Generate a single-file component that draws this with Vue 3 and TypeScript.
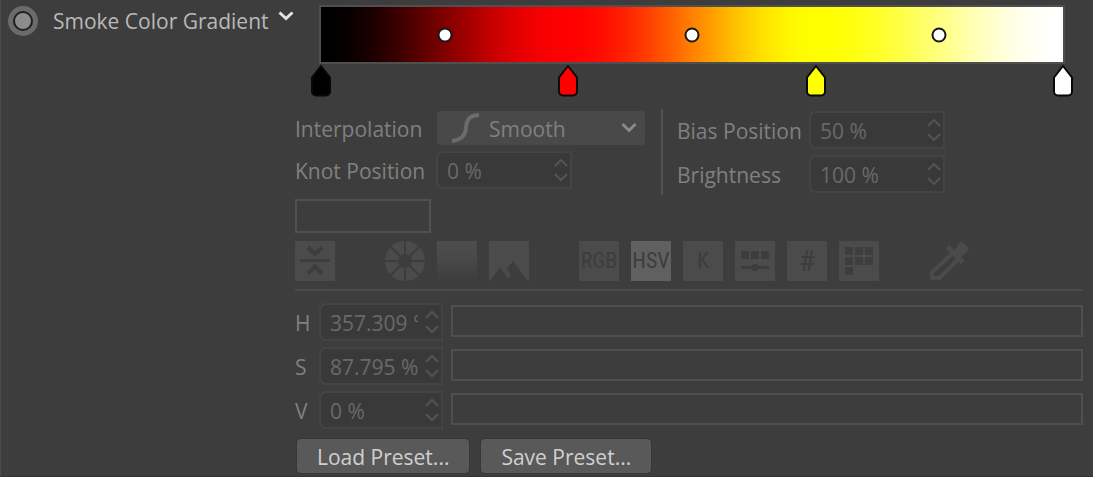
<script setup lang="ts">
import { computed, ref } from 'vue'

interface Knot {
  position: number
  color: [number, number, number]
}

interface Channel {
  id: string
  label: string
  value: string
}

const knots: Knot[] = [
  { position: 0, color: [0, 0, 0] },
  { position: 1 / 3, color: [255, 0, 0] },
  { position: 2 / 3, color: [255, 255, 0] },
  { position: 1, color: [255, 255, 255] },
]

const channels = ref<Channel[]>([
  { id: 'hue', label: 'H', value: '357.309 °' },
  { id: 'saturation', label: 'S', value: '87.795 %' },
  { id: 'value', label: 'V', value: '0 %' },
])

const interpolation = ref('Smooth')
const knotPosition = ref('0 %')
const biasPosition = ref('50 %')
const brightness = ref('100 %')

const rgb = (c: number[]): string => `rgb(${c.map((v) => Math.round(v)).join(', ')})`
const percent = (n: number): string => `${(n * 100).toFixed(2)}%`

const biases = computed<number[]>(() =>
  knots.slice(1).map((k, i) => (k.position + knots[i].position) / 2),
)

// Smoothstep interpolation between neighbouring knots, sampled into CSS stops.
const gradient = computed<string>(() => {
  const steps = 16
  const stops: string[] = []
  for (let i = 0; i < knots.length - 1; i++) {
    const a = knots[i]
    const b = knots[i + 1]
    for (let s = 0; s <= steps; s++) {
      const t = s / steps
      const e = t * t * (3 - 2 * t)
      const color = a.color.map((v, n) => v + (b.color[n] - v) * e)
      stops.push(`${rgb(color)} ${percent(a.position + (b.position - a.position) * t)}`)
    }
  }
  return `linear-gradient(to right, ${stops.join(', ')})`
})
</script>

<template>
  <main class="panel">
    <header class="title">
      <input id="track" class="keyframe" type="radio" name="track" />
      <label for="track">Smoke Color Gradient</label>
      <button class="fold" type="button" aria-label="Toggle gradient options">
        <svg width="18" height="12" viewBox="0 0 18 12"><path d="M2.5 2.5 9 8.5l6.500-6" /></svg>
      </button>
    </header>

    <section class="editor">
      <div class="ramp">
        <div class="strip" :style="{ background: gradient }">
          <button
            v-for="b in biases"
            :key="b"
            class="bias"
            type="button"
            aria-label="Bias"
            :style="{ left: percent(b) }"
          ></button>
          <button
            v-for="k in knots"
            :key="k.position"
            class="knot"
            type="button"
            aria-label="Knot"
            :style="{ left: percent(k.position), color: rgb(k.color) }"
          >
            <svg width="22" height="36" viewBox="0 0 22 36">
              <path d="M11 4 20 15.500v14a4 4 0 0 1-4 4H6a4 4 0 0 1-4-4v-14z" />
            </svg>
          </button>
        </div>
      </div>

      <div class="settings">
        <div class="fields left">
          <label for="interpolation">Interpolation</label>
          <div class="dropdown">
            <svg class="curve" width="30" height="32" viewBox="0 0 30 32">
              <path d="M1 29C10 28 14.500 24 15 16S18 3.500 28 3" />
            </svg>
            <select id="interpolation" v-model="interpolation" disabled>
              <option>Smooth</option>
            </select>
            <svg class="arrow" width="18" height="12" viewBox="0 0 18 12"><path d="M2.500 2 9 8.500 15.500 2" /></svg>
          </div>
          <label for="knot-position">Knot Position</label>
          <div class="spin">
            <input id="knot-position" v-model="knotPosition" type="text" disabled />
            <svg width="16" height="24" viewBox="0 0 16 24"><path d="m2 8 6-6 6 6M2 16l6 6 6-6" /></svg>
          </div>
        </div>
        <div class="fields right">
          <label for="bias-position">Bias Position</label>
          <div class="spin">
            <input id="bias-position" v-model="biasPosition" type="text" disabled />
            <svg width="16" height="24" viewBox="0 0 16 24"><path d="m2 8 6-6 6 6M2 16l6 6 6-6" /></svg>
          </div>
          <label for="brightness">Brightness</label>
          <div class="spin">
            <input id="brightness" v-model="brightness" type="text" disabled />
            <svg width="16" height="24" viewBox="0 0 16 24"><path d="m2 8 6-6 6 6M2 16l6 6 6-6" /></svg>
          </div>
        </div>
      </div>

      <button class="swatch" type="button" aria-label="Knot color" disabled></button>

      <div class="toolbar">
        <div class="group">
          <button class="tool tile" type="button" aria-label="Compact view" disabled>
            <svg viewBox="0 0 40 40">
              <path d="M5 19.500h30" />
              <path class="chevrons" d="m13 6.500 7 6.500 7-6.500M13 32.500l7-7 7 7" />
            </svg>
          </button>
        </div>
        <div class="group">
          <button class="tool" type="button" aria-label="Color wheel" disabled>
            <svg viewBox="0 0 40 40">
              <circle class="wheel" cx="20" cy="20" r="13.500" />
              <path class="spokes" d="M20 0v13M20 27v13M0 20h13M27 20h13M5.500 5.500l10 10M24.500 24.500l10 10M34.500 5.500l-10 10M15.500 24.500l-10 10" />
            </svg>
          </button>
          <button class="tool spectrum" type="button" aria-label="Spectrum" disabled></button>
          <button class="tool tile" type="button" aria-label="Color from image" disabled>
            <svg viewBox="0 0 40 40">
              <path class="hole" d="M1 40 11 26.500l8 11 2-2-4-6L24 20l15 20z" />
              <path class="slit" d="m16.500 29 4.500 6.500" />
            </svg>
          </button>
        </div>
        <div class="group">
          <button class="tool tile mode" type="button" disabled>RGB</button>
          <button class="tool tile mode active" type="button" disabled>HSV</button>
          <button class="tool tile mode" type="button" disabled>K</button>
          <button class="tool tile" type="button" aria-label="Color mixer" disabled>
            <svg viewBox="0 0 40 40">
              <path class="hole" d="M6 10h8v8H6zM16 10h8v8h-8zM26 10h8v8h-8zM6 25h28v3H6z" />
              <circle class="hole" cx="20" cy="26.500" r="3.500" />
            </svg>
          </button>
          <button class="tool tile mode symbol" type="button" disabled>#</button>
          <button class="tool tile" type="button" aria-label="Swatches" disabled>
            <svg viewBox="0 0 40 40">
              <path class="hole" d="M6 6h8v8H6zM16 6h8v8h-8zM26 6h8v8h-8zM6 16h8v8H6zM16 16h8v8h-8zM26 16h8v8h-8zM6 26h8v8H6z" />
            </svg>
          </button>
        </div>
        <div class="group">
          <button class="tool" type="button" aria-label="Pick color" disabled>
            <svg viewBox="0 0 40 40">
              <path class="glass" d="M22.500 13 3 31.500V37h7.500L29 18.500" />
              <path class="bulb" d="m23 12 8-10.500q1.500-1.500 3 0l5 5q1.500 1.500 0 3L30 18z" />
              <path class="collar" d="m18.500 5.500 15.500 16" />
            </svg>
          </button>
        </div>
      </div>

      <div class="channels">
        <div v-for="c in channels" :key="c.id" class="channel">
          <label :for="c.id">{{ c.label }}</label>
          <div class="spin">
            <input :id="c.id" v-model="c.value" type="text" disabled />
            <svg width="16" height="24" viewBox="0 0 16 24"><path d="m2 8 6-6 6 6M2 16l6 6 6-6" /></svg>
          </div>
          <input class="slider" type="range" :aria-label="c.label" disabled />
        </div>
      </div>

      <div class="presets">
        <button type="button">Load Preset...</button>
        <button type="button">Save Preset...</button>
      </div>
    </section>
  </main>
</template>

<style>
body {
  margin: 0;
  background: #3d3d3d;
}
</style>

<style scoped>
.panel,
.panel * {
  box-sizing: border-box;
}

.panel {
  display: grid;
  grid-template-columns: 294px 1fr;
  min-height: 100vh;
  border-left: 1px solid #4b4b4b;
  border-bottom: 1px solid #343434;
  background: #3d3d3d;
  color: #808080;
  font: 21px/30px "Open Sans", "Noto Sans", sans-serif;
}

button,
input,
select {
  margin: 0;
  padding: 0;
  border: 0;
  background: none;
  color: inherit;
  font: inherit;
}

svg {
  display: block;
  fill: none;
  stroke: currentColor;
  stroke-width: 3;
}

.title {
  display: flex;
  align-items: center;
  height: 42px;
  padding-left: 12px;
  color: #b9b9b9;
}

.keyframe {
  flex: none;
  width: 20px;
  height: 20px;
  appearance: none;
  border: 2px solid #202020;
  border-radius: 50%;
  background: #8c8c8c;
  box-shadow: 0 0 0 5px #6b6b6b;
}

.title label {
  margin-left: 20px;
  white-space: nowrap;
}

.fold {
  margin: 0 0 10px auto;
  color: #e4e4e4;
}

.editor {
  min-width: 0;
  padding: 5px 10px 3px 0;
}

.ramp {
  height: 104px;
  padding: 0 18px 0 24px;
}

.strip {
  position: relative;
  height: 59px;
  border: 2px solid #4f4f4f;
  background-clip: padding-box !important;
}

.bias {
  position: absolute;
  top: 50%;
  width: 15px;
  height: 15px;
  border: 2px solid #181818;
  border-radius: 50%;
  background: #fff;
  transform: translate(-50%, -50%);
}

.knot {
  position: absolute;
  top: 100%;
  transform: translateX(-50%);
}

.knot path {
  fill: currentColor;
  stroke: #080808;
  stroke-width: 2;
}

.settings {
  display: flex;
}

.fields {
  display: grid;
  align-items: center;
}

.fields label,
.channel label,
.spin input {
  padding-top: 2px;
}

.left {
  grid-template-columns: 141px 209px;
  grid-template-rows: 38px 38px;
  row-gap: 4px;
  padding-right: 16px;
}

.right {
  grid-template-columns: 132px 136px;
  grid-template-rows: 38px 38px;
  row-gap: 6px;
  padding: 2px 0 2px 14px;
  border-left: 2px solid #505050;
}

.dropdown {
  position: relative;
  height: 34px;
  margin-left: 1px;
}

select {
  width: 100%;
  height: 100%;
  padding: 2px 0 0 52px;
  appearance: none;
  border-radius: 4px;
  background: #494949;
  opacity: 1;
}

.curve {
  position: absolute;
  top: 1px;
  left: 14px;
  color: #6c6c6c;
  stroke-width: 4;
}

.arrow {
  position: absolute;
  top: 11px;
  right: 7px;
  color: #8a8a8a;
}

.spin {
  display: flex;
  align-items: center;
  justify-content: space-between;
  width: 136px;
  height: 38px;
  padding: 0 1px 0 9px;
  border: 2px solid #444;
  border-radius: 7px 0 0 7px;
  background: #393939;
  color: #696969;
}

.spin input {
  flex: 1;
  width: 0;
  min-width: 0;
  margin-right: 6px;
}

.spin svg {
  flex: none;
  color: #545454;
  stroke-width: 2;
}

.swatch {
  display: block;
  width: 136px;
  height: 34px;
  margin-top: 4px;
  border: 2px solid #505050;
}

.toolbar {
  display: flex;
  gap: 50px;
  padding: 8px 0;
  border-bottom: 2px solid #4b4b4b;
}

.group {
  display: flex;
  gap: 12px;
}

.tool {
  width: 40px;
  height: 40px;
  color: #4b4b4b;
}

.tool svg {
  width: 40px;
  height: 40px;
}

.tile {
  background: #4b4b4b;
  color: #3d3d3d;
}

.mode {
  font: 22px/40px "Roboto Condensed", "Liberation Sans Narrow", "Liberation Sans", sans-serif;
}

.symbol {
  font-size: 30px;
}

.active {
  background: #606060;
}

.spectrum {
  background: linear-gradient(#4d4d4d, #494949 40%, #3d3d3d);
}

.hole {
  fill: #3d3d3d;
  stroke: none;
}

.slit {
  stroke: #4b4b4b;
  stroke-width: 3;
}

.chevrons {
  stroke-width: 4;
}

.wheel {
  stroke-width: 13;
}

.spokes {
  stroke: #3d3d3d;
  stroke-width: 2;
}

.glass {
  stroke-width: 4;
}

.bulb {
  fill: currentColor;
  stroke: none;
}

.collar {
  stroke-width: 5;
}

.channels {
  display: grid;
  gap: 6px;
  padding-top: 12px;
}

.channel {
  display: grid;
  grid-template-columns: 24px 124px 1fr;
  align-items: center;
}

.channel .spin {
  width: 124px;
}

.slider {
  width: auto;
  height: 32px;
  margin: 0 0 2px 8px;
  appearance: none;
  border: 2px solid #4f4f4f;
}

.slider::-webkit-slider-thumb {
  appearance: none;
  width: 0;
}

.presets {
  display: flex;
  gap: 12px;
  padding: 10px 0 0 2px;
}

.presets button {
  height: 34px;
  padding: 2px 20px 0;
  border-radius: 4px;
  background: #595959;
  box-shadow: 0 0 0 1px #373737;
  color: #d0d0d0;
}
</style>
